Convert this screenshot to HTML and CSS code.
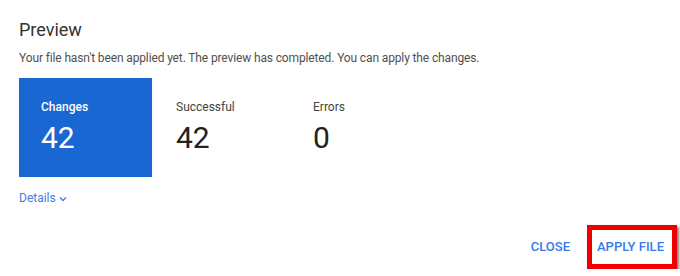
FILE: index.html
```html
<!DOCTYPE html>
<html>
<head>
<meta charset="utf-8">
<link rel="stylesheet" href="styles.css">
</head>
<body>
<div class="dialog">
  <h1 class="title">Preview</h1>
  <p class="subtitle">Your file hasn't been applied yet. The preview has completed. You can apply the changes.</p>
  <div class="stats">
    <div class="stat stat-active">
      <div class="stat-label">Changes</div>
      <div class="stat-value">42</div>
    </div>
    <div class="stat">
      <div class="stat-label">Successful</div>
      <div class="stat-value">42</div>
    </div>
    <div class="stat">
      <div class="stat-label">Errors</div>
      <div class="stat-value">0</div>
    </div>
  </div>
  <div class="details">Details <svg class="chev" width="8" height="6" viewBox="0 0 8 6"><path d="M1 1.5 L4 4.5 L7 1.5" fill="none" stroke="currentColor" stroke-width="1.3"/></svg></div>
  <div class="actions">
    <button class="btn btn-close">CLOSE</button>
    <button class="btn btn-apply">APPLY FILE</button>
  </div>
</div>
</body>
</html>
```
FILE: styles.css
```css
html, body {
  margin: 0;
  padding: 0;
  background: #fff;
}
body {
  font-family: Roboto, "Liberation Sans", Arial, sans-serif;
  color: #333;
}
.dialog {
  padding: 18px 3px 0 19px;
}
.title {
  margin: 0;
  font-size: 18px;
  line-height: 24px;
  font-weight: 400;
  color: #333;
}
.subtitle {
  margin: 8px 0 0;
  font-size: 12px;
  line-height: 16px;
  letter-spacing: -0.13px;
  color: #505050;
}
.stats {
  display: flex;
  gap: 2px;
  margin-top: 12px;
}
.stat {
  box-sizing: border-box;
  width: 135px;
  padding: 21px 22px 21px 22px;
}
.stat-active {
  width: 133px;
  background: #1967d2;
  color: #fff;
}
.stat-label {
  font-size: 12px;
  line-height: 16px;
  color: #444;
}
.stat-active .stat-label {
  color: #fff;
  font-weight: 500;
}
.stat-value {
  margin-top: 5px;
  font-size: 30px;
  line-height: 36px;
  color: #222;
}
.stat-active .stat-value {
  color: #fff;
}
.details {
  margin-top: 13px;
  font-size: 12px;
  line-height: 16px;
  color: #3f7de0;
  display: flex;
  align-items: center;
  gap: 3px;
}
.chev {
  margin-top: 1px;
}
.actions {
  display: flex;
  justify-content: flex-end;
  align-items: center;
  gap: 17px;
  margin-top: 19px;
}
.btn {
  font-family: Roboto, "Liberation Sans", Arial, sans-serif;
  font-size: 13px;
  line-height: 16px;
  font-weight: 500;
  color: #3b78e7;
  background: none;
  border: none;
  padding: 0;
  cursor: pointer;
}
.btn-apply {
  border: 5px solid #f00000;
  padding: 9px 8px 9px 5px;
  box-shadow: 2px 2px 3px rgba(0, 0, 0, 0.55);
}
```
